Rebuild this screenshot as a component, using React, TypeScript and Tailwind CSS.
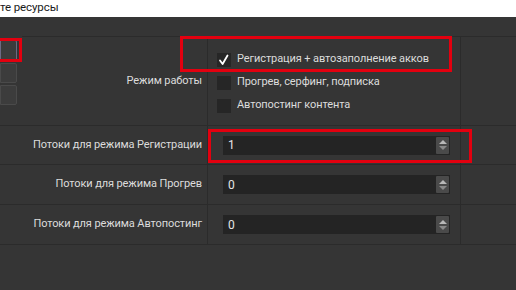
import React from 'react';

function Check({ checked, label }: { checked?: boolean; label: string }) {
    return (
        <div className="h-[23px] flex items-center gap-[6px]">
            <div className="w-[14px] h-[14px] bg-[#262626] flex items-center justify-center">
                {checked && (
                    <svg viewBox="0 0 14 14" className="w-[14px] h-[14px]">
                        <path d="M3 7.5 L5.6 11 L10.5 2.5" fill="none" stroke="#ffffff" strokeWidth="1.8" strokeLinecap="round" strokeLinejoin="round" />
                    </svg>
                )}
            </div>
            <span>{label}</span>
        </div>
    );
}

function NumberField({ value }: { value: string }) {
    return (
        <div className="ml-[15px] w-[227px] h-[19px] bg-[#242424] flex items-center">
            <span className="flex-1 pl-[5px] text-[#e6e6e6] text-[12px]">{value}</span>
            <div className="w-[13px] h-[17px] mr-[1px] bg-[#4a4a4a] rounded-[1px] flex flex-col items-center justify-center gap-[2px]">
                <div className="w-0 h-0 border-l-[4px] border-r-[4px] border-b-[4px] border-l-transparent border-r-transparent border-b-[#b8b8b8]" />
                <div className="w-0 h-0 border-l-[4px] border-r-[4px] border-t-[4px] border-l-transparent border-r-transparent border-t-[#8a8a8a]" />
            </div>
        </div>
    );
}

function Row({ label, children, className }: { label: string; children: React.ReactNode; className?: string }) {
    return (
        <div className={'flex border-b border-[#2b2b2b] ' + (className ?? '')}>
            <div className="w-[208px] shrink-0 border-r border-[#2b2b2b] flex items-center justify-end pr-[5px] text-[#dcdcdc]">
                {label}
            </div>
            <div className="w-[253px] shrink-0 border-r border-[#2b2b2b] flex items-center">{children}</div>
            <div className="flex-1" />
        </div>
    );
}

export default function App() {
    return (
        <div
            className="relative w-[516px] h-[290px] overflow-hidden bg-[#353535] text-[11px] tracking-[-0.1px]"
            style={{ fontFamily: 'Roboto, "Liberation Sans", sans-serif' }}
        >
            {/* Window title strip */}
            <div className="h-[17px] bg-white text-[#1a1a1a] text-[11.5px] leading-[14px]">те ресурсы</div>

            <div className="flex">
                {/* Left button column */}
                <div className="w-[22px] shrink-0 pt-[23px] flex flex-col gap-[2px]">
                    <div className="w-[17px] h-[21px] bg-[#3c3c3c] border border-[#6d6a85] rounded-r-[2px]" />
                    <div className="w-[17px] h-[20px] bg-[#3c3c3c] border border-[#4a4a4a] rounded-r-[2px]" />
                    <div className="w-[17px] h-[20px] bg-[#3c3c3c] border border-[#4a4a4a] rounded-r-[2px]" />
                </div>

                {/* Settings form */}
                <div className="flex-1 -ml-[22px]">
                    <div className="h-[20px] ml-[22px] border-b border-[#2b2b2b]" />
                    <Row label="Режим работы" className="h-[89px]">
                        <div className="pl-[9px] pt-[3px] flex flex-col text-[#dcdcdc]">
                            <Check checked label="Регистрация + автозаполнение акков" />
                            <Check label="Прогрев, серфинг, подписка" />
                            <Check label="Автопостинг контента" />
                        </div>
                    </Row>
                    <Row label="Потоки для режима Регистрации" className="h-[39px]">
                        <NumberField value="1" />
                    </Row>
                    <Row label="Потоки для режима Прогрев" className="h-[40px]">
                        <NumberField value="0" />
                    </Row>
                    <Row label="Потоки для режима Автопостинг" className="h-[40px]">
                        <NumberField value="0" />
                    </Row>
                </div>
            </div>

            {/* Red annotation boxes */}
            <div className="absolute left-[-3px] top-[38px] w-[25px] h-[24px] border-[3px] border-[#e3000f]" />
            <div className="absolute left-[180px] top-[36px] w-[272px] h-[36px] border-[3px] border-[#e3000f]" />
            <div className="absolute left-[208px] top-[129px] w-[264px] h-[34px] border-[3px] border-[#e3000f]" />
        </div>
    );
}
